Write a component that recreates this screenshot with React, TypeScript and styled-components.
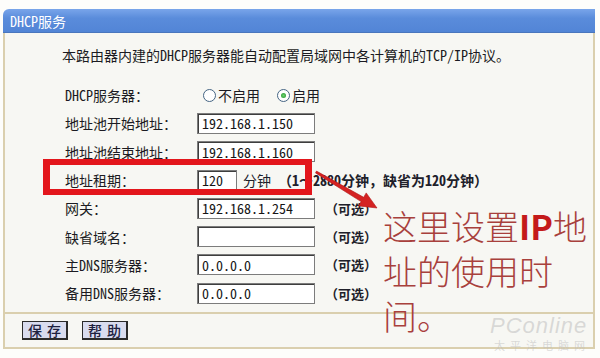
import styled, { createGlobalStyle } from 'styled-components';

const GlobalStyle = createGlobalStyle`
    html, body {
        margin: 0;
        padding: 0;
        background: #fdfdfb;
    }
    body {
        font-family: "Noto Sans Mono CJK SC", "Noto Sans CJK SC", sans-serif;
        color: #1b1b22;
    }
`

const Page = styled.div`
    position: relative;
    width: 600px;
    height: 358px;
    padding: 9px 5px 0 3px;
    box-sizing: border-box;
    overflow: hidden;
`

const Header = styled.div`
    height: 23px;
    display: flex;
    align-items: center;
    padding-left: 7px;
    border-radius: 6px 0 0 0;
    background: linear-gradient(#79a5ea, #5a8cdb 40%, #5285d6);
    border-bottom: 1px solid #4a76bd;
    color: #fff;
    font-size: 14px;
`

const Body = styled.div`
    border-left: 2px solid #dacfae;
    border-right: 2px solid #dacfae;
    background: #f7f7f3;
    padding: 12px 0 5px 0;
`

const Description = styled.div`
    padding-left: 57px;
    font-size: 14px;
    line-height: 20px;
    height: 20px;
    white-space: nowrap;
`

const Form = styled.div`
    margin-top: 16px;
    padding-left: 60px;
    display: grid;
    grid-template-columns: 132px 1fr;
    grid-auto-rows: 28.3px;
    align-items: center;
`

const Label = styled.div`
    font-size: 14px;
    white-space: nowrap;
`

const Field = styled.div`
    display: flex;
    align-items: center;
    font-size: 14px;
    white-space: nowrap;
`

const TextBox = styled.input<{ $w: number }>`
    width: ${p => p.$w}px;
    height: 21px;
    box-sizing: border-box;
    margin: 0;
    padding: 0 0 0 4px;
    border: 1px solid #7c7c7c;
    box-shadow: inset 1px 1px 0 #3e3e3e;
    background: #fff;
    font-family: "Noto Sans Mono CJK SC", "Noto Sans CJK SC", sans-serif;
    font-size: 14px;
    color: #151515;
    outline: none;
`

const Hint = styled.span<{ $gap: number; $size: number }>`
    margin-left: ${p => p.$gap}px;
    font-size: ${p => p.$size}px;
    font-weight: 600;
    color: #20202a;
`

const RadioOption = styled.span<{ $gap: number }>`
    display: flex;
    align-items: center;
    margin-left: ${p => p.$gap}px;
`

const RadioDot = styled.span<{ $on?: boolean }>`
    position: relative;
    width: 13px;
    height: 13px;
    box-sizing: border-box;
    border-radius: 50%;
    border: 1px solid #456583;
    background: #fff;
    margin-right: 2px;
    &::after {
        content: '';
        display: ${p => (p.$on ? 'block' : 'none')};
        position: absolute;
        left: 3px;
        top: 3px;
        width: 5px;
        height: 5px;
        border-radius: 50%;
        background: radial-gradient(#6fd36f, #1e8f2a);
    }
`

const Footer = styled.div`
    height: 33px;
    display: flex;
    align-items: center;
    gap: 14px;
    padding-left: 17px;
    border: 2px solid #dacfae;
    background: #f7f7f3;
`

const Button = styled.button`
    width: 46px;
    height: 19px;
    padding: 0;
    border: 1px solid #2b2b2b;
    border-right-width: 2px;
    border-bottom-width: 2px;
    background: #d9dcef;
    font-family: "Noto Sans CJK SC", sans-serif;
    font-size: 14px;
    line-height: 15px;
    font-weight: 500;
    letter-spacing: 5px;
    text-indent: 5px;
    color: #1d2140;
`

const HighlightBox = styled.div`
    position: absolute;
    left: 43px;
    top: 159px;
    width: 269px;
    height: 36px;
    box-sizing: border-box;
    border: 7px solid #e3161c;
    border-top-width: 6px;
    border-bottom-width: 6px;
`

const Arrow = styled.svg`
    position: absolute;
    left: 0;
    top: 0;
`

const Note = styled.div`
    position: absolute;
    left: 383px;
    top: 203px;
    font-family: "Noto Sans CJK SC", sans-serif;
    font-size: 34px;
    font-weight: 300;
    line-height: 45px;
    color: #a8403c;
    white-space: nowrap;
    b {
        color: #c41a1a;
        font-weight: 700;
    }
`

const Watermark = styled.div`
    position: absolute;
    left: 490px;
    top: 314px;
    color: rgba(190, 190, 190, 0.55);
`

const WatermarkBrand = styled.div`
    font-family: "Liberation Sans", sans-serif;
    font-size: 22px;
    line-height: 24px;
    font-style: italic;
    letter-spacing: 1px;
`

const WatermarkSub = styled.div`
    font-family: "Noto Sans CJK SC", sans-serif;
    font-size: 11px;
    line-height: 14px;
    letter-spacing: 5px;
    padding-left: 4px;
`

type Row = { label: string; value?: string; width?: number; optional?: boolean }

const rows: Row[] = [
    { label: '地址池开始地址：', value: '192.168.1.150', width: 118 },
    { label: '地址池结束地址：', value: '192.168.1.160', width: 118 },
    { label: '地址租期：', value: '120', width: 40 },
    { label: '网关：', value: '192.168.1.254', width: 118, optional: true },
    { label: '缺省域名：', value: '', width: 118, optional: true },
    { label: '主DNS服务器：', value: '0.0.0.0', width: 118, optional: true },
    { label: '备用DNS服务器：', value: '0.0.0.0', width: 118, optional: true },
]

export default function App() {
    return (
        <Page>
            <GlobalStyle />
            <Header>DHCP服务</Header>
            <Body>
                <Description>本路由器内建的DHCP服务器能自动配置局域网中各计算机的TCP/IP协议。</Description>
                <Form>
                    <Label>DHCP服务器：</Label>
                    <Field>
                        <RadioOption $gap={6}><RadioDot />不启用</RadioOption>
                        <RadioOption $gap={17}><RadioDot $on />启用</RadioOption>
                    </Field>
                    {rows.map(r => (
                        <>
                            <Label key={r.label}>{r.label}</Label>
                            <Field key={r.label + '-f'}>
                                <TextBox $w={r.width ?? 118} defaultValue={r.value} readOnly />
                                {r.label === '地址租期：' && (
                                    <Hint $gap={6} $size={14}>
                                        <span style={{ fontWeight: 400 }}>分钟 </span>（1～2880分钟，缺省为120分钟）
                                    </Hint>
                                )}
                                {r.optional && <Hint $gap={10} $size={13}>（可选）</Hint>}
                            </Field>
                        </>
                    ))}
                </Form>
            </Body>
            <Footer>
                <Button>保存</Button>
                <Button>帮助</Button>
            </Footer>

            <HighlightBox />
            <Arrow width="600" height="358" viewBox="0 0 600 358">
                <polygon
                    points="316.5,171.1 363.7,197.3 366.2,192.9 377,208 358.6,205.9 361.1,201.6 315.5,172.9"
                    fill="#d42222"
                    stroke="#b01515"
                    strokeWidth="0.6"
                />
            </Arrow>
            <Note>
                <div>这里设置<b>IP</b>地</div>
                <div>址的使用时</div>
                <div>间。</div>
            </Note>
            <Watermark>
                <WatermarkBrand>PConline</WatermarkBrand>
                <WatermarkSub>太平洋电脑网</WatermarkSub>
            </Watermark>
        </Page>
    )
}
